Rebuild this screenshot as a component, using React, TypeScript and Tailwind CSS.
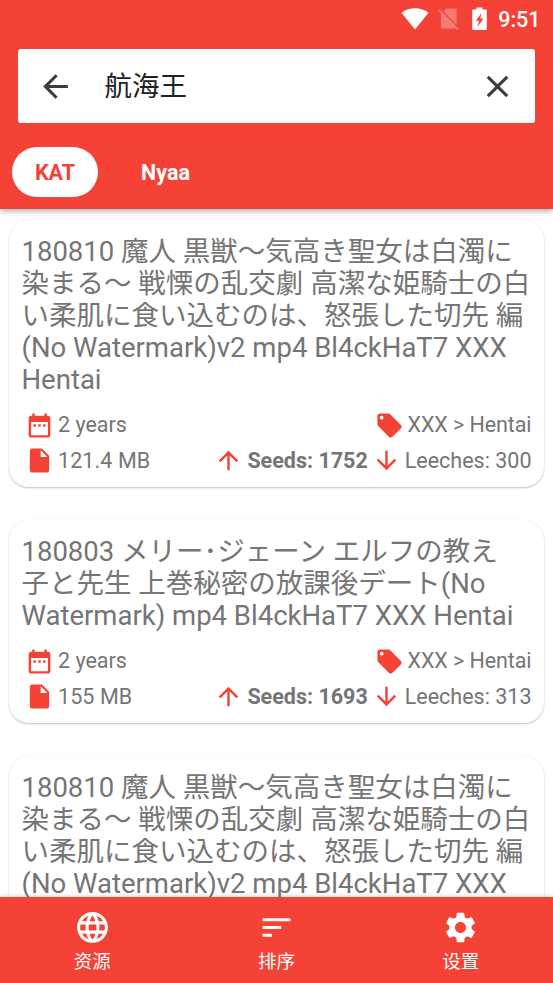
import {
  MdArrowBack,
  MdArrowDownward,
  MdArrowUpward,
  MdClose,
  MdDateRange,
  MdInsertDriveFile,
  MdLanguage,
  MdLocalOffer,
  MdSettings,
  MdSort,
} from "react-icons/md";

interface Torrent {
  id: number;
  title: string[];
  age: string;
  size: string;
  category: string;
  seeds: number;
  leeches: number;
}

const torrents: Torrent[] = [
  {
    id: 1,
    title: [
      "180810 魔人 黒獣～気高き聖女は白濁に",
      "染まる～ 戦慄の乱交劇 高潔な姫騎士の白",
      "い柔肌に食い込むのは、怒張した切先 編",
      "(No Watermark)v2 mp4 Bl4ckHaT7 XXX",
      "Hentai",
    ],
    age: "2 years",
    size: "121.4 MB",
    category: "XXX > Hentai",
    seeds: 1752,
    leeches: 300,
  },
  {
    id: 2,
    title: [
      "180803 メリー･ジェーン エルフの教え",
      "子と先生 上巻秘密の放課後デート(No",
      "Watermark) mp4 Bl4ckHaT7 XXX Hentai",
    ],
    age: "2 years",
    size: "155 MB",
    category: "XXX > Hentai",
    seeds: 1693,
    leeches: 313,
  },
  {
    id: 3,
    title: [
      "180810 魔人 黒獣～気高き聖女は白濁に",
      "染まる～ 戦慄の乱交劇 高潔な姫騎士の白",
      "い柔肌に食い込むのは、怒張した切先 編",
      "(No Watermark)v2 mp4 Bl4ckHaT7 XXX",
      "Hentai",
    ],
    age: "2 years",
    size: "121.4 MB",
    category: "XXX > Hentai",
    seeds: 1752,
    leeches: 300,
  },
];

const navItems = [
  { label: "资源", icon: MdLanguage },
  { label: "排序", icon: MdSort },
  { label: "设置", icon: MdSettings },
];

function StatusBar() {
  return (
    <div className="flex h-[37px] shrink-0 items-center justify-end pr-[12.5px] text-white">
      <svg className="mr-[9px] h-[22px] w-[28px]" viewBox="0 0 28 22" fill="currentColor">
        <path d="M14 21.5.5 4.700C4 1.800 8.800.2 14 .2s10 1.600 13.500 4.500z" />
      </svg>
      <svg className="mr-[13px] h-[22px] w-[21px]" viewBox="0 0 21 22" fill="none">
        <path d="M8.5.5H17a1.6 1.6 0 0 1 1.6 1.6v14.7L5.6 3.4zM3 5.2 18 20.2c-.3.2-.6.3-1 .3H4.6A1.6 1.6 0 0 1 3 18.9z" fill="#fff" fillOpacity=".3" />
        <path d="m1 2 19 19.3" stroke="#fff" strokeOpacity=".35" strokeWidth="1.7" />
      </svg>
      <svg className="mr-[11px] h-[24px] w-[15px]" viewBox="0 0 15 24" fill="currentColor" fillRule="evenodd">
        <path d="M1.2 2.6h3.300v-2h6v2h3.300q1 0 1 1V22q0 1-1 1H1.200q-1 0-1-1V3.600q0-1 1-1zM9.500 6 3.800 13.800h3.300L5.500 20l6-8.600H8.200z" />
      </svg>
      <span className="pt-[2px] text-[21.5px] leading-[35px] font-medium">9:51</span>
    </div>
  );
}

function SearchBar() {
  return (
    <div className="mx-[18px] mt-[12px] flex h-[74px] shrink-0 items-center rounded-[3px] bg-white px-[19px]">
      <MdArrowBack className="size-[37px] text-[#3c3c3c]" />
      <span className="ml-[30.5px] flex-1 pt-[2px] text-[27.5px] leading-[40px] text-[#212121]">航海王</span>
      <MdClose className="size-[37px] text-[#3c3c3c]" />
    </div>
  );
}

function SourceTabs() {
  return (
    <div className="mt-[24px] flex h-[50px] shrink-0 pl-[12px] text-[21.5px] leading-[48px] font-bold">
      <button className="w-[86px] rounded-full bg-white pt-[2px] text-[#f44336]">KAT</button>
      <button className="ml-[24px] w-[87px] pt-[2px] text-white">Nyaa</button>
    </div>
  );
}

function TorrentCard({ torrent }: { torrent: Torrent }) {
  return (
    <article className="shrink-0 rounded-[20px] bg-white pt-[16px] pr-[12.5px] pb-[9px] pl-[13px] shadow-[0_1px_2px_rgba(0,0,0,0.24),0_0_1px_rgba(0,0,0,0.08)]">
      <h2 className="text-[27.5px] leading-[32.1px] whitespace-nowrap">
        {torrent.title.map((line, index) => (
          <span key={index} className="block">{line}</span>
        ))}
      </h2>
      <div className="mt-[11px] flex h-[36px] items-center justify-between pl-[3px]">
        <span className="flex items-center gap-[4.5px]">
          <MdDateRange className="size-[29px] text-[#f44336]" />
          {torrent.age}
        </span>
        <span className="flex items-center gap-[4px] tracking-[-0.08px]">
          <MdLocalOffer className="size-[29px] text-[#f44336]" />
          {torrent.category}
        </span>
      </div>
      <div className="flex h-[35px] items-center pl-[3px]">
        <MdInsertDriveFile className="mr-[4.5px] size-[29px] text-[#f44336]" />
        <span className="tracking-[0.1px]">{torrent.size}</span>
        <MdArrowUpward className="mr-[4px] ml-auto size-[29px] text-[#f44336]" />
        <strong>Seeds: {torrent.seeds}</strong>
        <MdArrowDownward className="mr-[4px] ml-[4px] size-[29px] text-[#f44336]" />
        Leeches: {torrent.leeches}
      </div>
    </article>
  );
}

function BottomNav() {
  return (
    <nav className="z-10 flex h-[86px] shrink-0 bg-[#f44336] text-white shadow-[0_-1px_5px_rgba(0,0,0,0.15)]">
      {navItems.map(({ label, icon: Icon }) => (
        <button key={label} className="flex flex-1 flex-col items-center pt-[12px]">
          <Icon className="size-[37px]" />
          <span className="pt-[2px] text-[18.5px] leading-[29px]">{label}</span>
        </button>
      ))}
    </nav>
  );
}

export default function App() {
  return (
    <div className="flex h-[983px] w-[553px] flex-col overflow-hidden bg-white font-[Roboto,'Noto_Sans_CJK_SC',sans-serif]">
      <header className="z-10 flex h-[209px] shrink-0 flex-col bg-[#f44336] shadow-[0_2px_6px_rgba(0,0,0,0.35)]">
        <StatusBar />
        <SearchBar />
        <SourceTabs />
      </header>
      <main lang="ja" className="flex min-h-0 flex-1 flex-col gap-[32.7px] overflow-hidden pt-[11px] pr-[9px] pl-[8.5px] font-[Roboto,'Noto_Sans_CJK_JP',sans-serif] text-[21.5px] leading-[34px] text-[#757575]">
        {torrents.map((torrent) => (
          <TorrentCard key={torrent.id} torrent={torrent} />
        ))}
      </main>
      <BottomNav />
    </div>
  );
}
